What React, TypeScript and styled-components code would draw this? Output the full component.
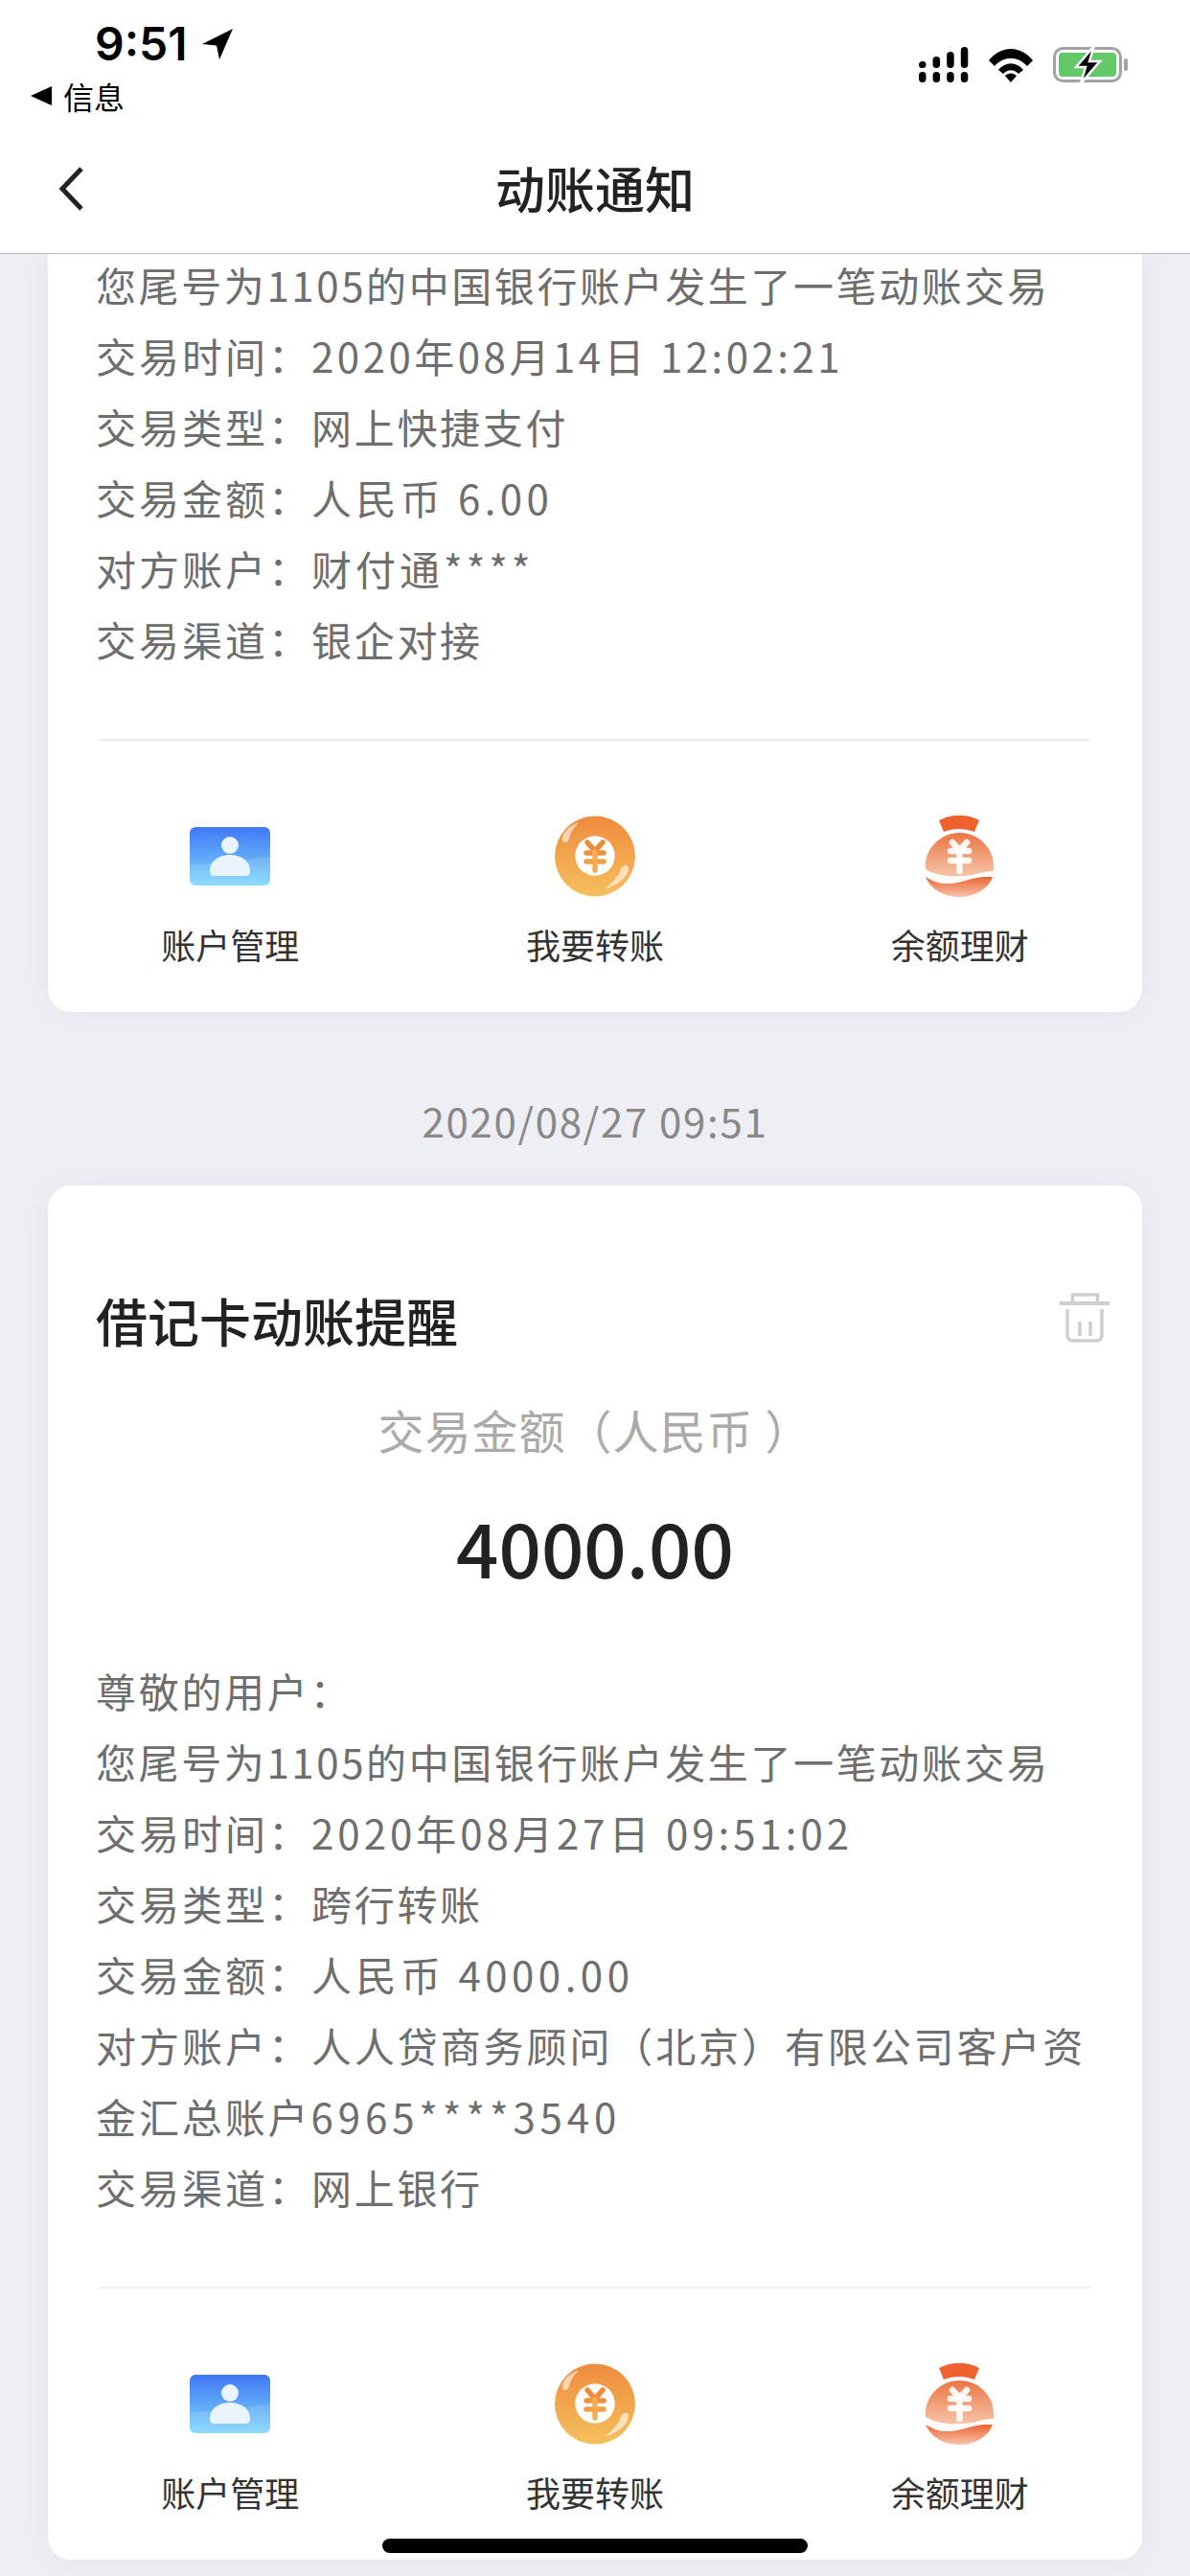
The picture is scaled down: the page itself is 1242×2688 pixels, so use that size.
import React from "react";
import styled, { createGlobalStyle } from "styled-components";

const GlobalStyle = createGlobalStyle`
  html, body {
    margin: 0;
    padding: 0;
    background: #eeeef5;
  }
  body {
    font-family: "Noto Sans CJK SC", "Noto Sans", sans-serif;
    color: #222;
  }
`;

function LocationArrow() {
  return (
    <svg width="34" height="34" viewBox="0 0 34 34">
      <path d="M33 1 L1 17 L16 18.5 L19 33 Z" fill="#000" />
    </svg>
  );
}

function SignalIcon() {
  const bars = [0, 1, 2, 3];
  return (
    <svg width="52" height="37" viewBox="0 0 52 37">
      {bars.map((i) => (
        <rect key={`b${i}`} x={i * 14.6} y="26" width="7.5" height="11" rx="3.7" fill="#000" />
      ))}
      {bars.map((i) => (
        <rect
          key={`t${i}`}
          x={i * 14.6}
          y={15 - i * 5}
          width="7.5"
          height={7 + i * 5}
          rx="3.7"
          fill="#000"
        />
      ))}
    </svg>
  );
}

function WifiIcon() {
  return (
    <svg width="48" height="36" viewBox="0 0 48 36">
      <path d="M1 13 C14 -3 34 -3 47 13 L41 19 C31 8 17 8 7 19 Z" fill="#000" />
      <path d="M11 23 C18 14 30 14 37 23 L32 27 C27 22 21 22 16 27 Z" fill="#000" />
      <path d="M18 29 C21 25.5 27 25.5 30 29 L24 36 Z" fill="#000" />
    </svg>
  );
}

function BatteryIcon() {
  return (
    <svg width="78" height="37" viewBox="0 0 78 37">
      <rect x="1.5" y="1.5" width="69" height="34" rx="9" fill="none" stroke="#a3a3a3" strokeWidth="3" />
      <rect x="74" y="12" width="4" height="13" rx="2" fill="#a3a3a3" />
      <rect x="6" y="6" width="60" height="25" rx="4" fill="#62c868" />
      <path d="M43 -1 L24 21 H34 L29 38 L49 15 H38 Z" fill="#000" stroke="#fff" strokeWidth="2.5" />
    </svg>
  );
}

function TrashIcon() {
  return (
    <svg width="52" height="52" viewBox="0 0 52 52" fill="none" stroke="#cfcfcf" strokeWidth="3.5">
      <path d="M13.5 9 V2 H39.5 V9" />
      <path d="M0 11 H52" strokeWidth="4" />
      <path d="M8 17 V44 C8 48 10 50 14 50 H38 C42 50 44 48 44 44 V17" />
      <path d="M21 30 V45 M32 30 V45" />
    </svg>
  );
}

function AccountIcon() {
  return (
    <svg width="84" height="61" viewBox="0 0 84 61">
      <defs>
        <linearGradient id="accountBg" x1="0" y1="0" x2="0" y2="1">
          <stop offset="0" stopColor="#3f78f6" />
          <stop offset="1" stopColor="#7dd6fd" />
        </linearGradient>
      </defs>
      <rect width="84" height="61" rx="6" fill="url(#accountBg)" />
      <path d="M0 40 C28 37 60 34 84 31 V55 C84 59 82 61 78 61 H6 C2 61 0 59 0 55 Z" fill="#fff" opacity="0.13" />
      <circle cx="42" cy="19" r="9" fill="#eaf4fe" />
      <path d="M21 46 C21 35 31 29 42 29 C53 29 63 35 63 46 C63 50 61 51 58 51 H26 C23 51 21 50 21 46 Z" fill="#eaf4fe" />
    </svg>
  );
}

function CoinIcon() {
  return (
    <svg width="84" height="85" viewBox="0 0 84 85">
      <defs>
        <linearGradient id="coinBg" x1="0" y1="0" x2="0" y2="1">
          <stop offset="0" stopColor="#ef8b3e" />
          <stop offset="1" stopColor="#f5c05c" />
        </linearGradient>
      </defs>
      <circle cx="42" cy="42.5" r="42" fill="url(#coinBg)" />
      <circle cx="42" cy="42" r="20.7" fill="#fff" />
      <g fill="none" strokeWidth="5.5" strokeLinecap="round">
        <path d="M34 28 L42 37 L50 28" stroke="#ee8a3c" />
        <path d="M33 39 H51" stroke="#ef903f" />
        <path d="M33 48 H51" stroke="#f1a047" />
        <path d="M42 38 V57" stroke="#f3ad4e" />
      </g>
      <path d="M8 26 C7 18 15 11 25 7 C20 13 16 18 15 24 C14 28 9 30 8 26 Z" fill="#fff" opacity="0.6" />
      <path d="M77 54 C78 64 66 72 52 77 C60 70 66 64 68 58 C70 51 76 50 77 54 Z" fill="#fff" opacity="0.6" />
    </svg>
  );
}

function BagIcon() {
  return (
    <svg width="73" height="85" viewBox="0 0 73 85">
      <defs>
        <linearGradient id="bagBg" x1="0" y1="0" x2="0" y2="1">
          <stop offset="0" stopColor="#ec7544" />
          <stop offset="1" stopColor="#f6c4a8" />
        </linearGradient>
        <linearGradient id="bagBase" x1="0" y1="0" x2="0" y2="1">
          <stop offset="0" stopColor="#ec6530" />
          <stop offset="1" stopColor="#f7c3ad" />
        </linearGradient>
      </defs>
      <path d="M15 5 C28 -2 44 -2 57 5 L52 17 C42 13 30 13 20 17 Z" fill="#ef622d" />
      <path d="M36.5 18 C56 18 72 34 72 52 V58 C62 57 53 63 41 63 C28 64 12 63 1 56 V52 C1 34 17 18 36.5 18 Z" fill="url(#bagBg)" />
      <path d="M1 64 C8 68 14 71 21 71 C35 72 48 65 61 64 L71 64 C67 76 53 85 36.5 85 C19 85 6 76 1 64 Z" fill="url(#bagBase)" />
      <g fill="none" stroke="#fff" strokeOpacity="0.92" strokeWidth="6.5" strokeLinecap="round">
        <path d="M29 28 L36.5 36 L44 28" />
        <path d="M27 37 H46" />
        <path d="M27 47 H46" />
        <path d="M36.5 37 V58" />
      </g>
    </svg>
  );
}

const actions = [
  { label: "账户管理", Icon: AccountIcon },
  { label: "我要转账", Icon: CoinIcon },
  { label: "余额理财", Icon: BagIcon },
];

function Actions() {
  return (
    <ActionRow>
      {actions.map(({ label, Icon }) => (
        <ActionItem key={label}>
          <ActionIcon>
            <Icon />
          </ActionIcon>
          <ActionLabel>{label}</ActionLabel>
        </ActionItem>
      ))}
    </ActionRow>
  );
}

// spacing is the tracking of the value text, tail is a run of digits after it
type Detail = { label?: string; value: string; spacing?: number; tail?: string };

const firstDetails: Detail[] = [
  { value: "您尾号为1105的中国银行账户发生了一笔动账交易", spacing: 2.6 },
  { label: "交易时间：", value: "2020年08月14日 12:02:21", spacing: 3.5 },
  { label: "交易类型：", value: "网上快捷支付" },
  { label: "交易金额：", value: "人民币 6.00", spacing: 4.4 },
  { label: "对方账户：", value: "财付通****", spacing: 4 },
  { label: "交易渠道：", value: "银企对接" },
];

const secondDetails: Detail[] = [
  { value: "尊敬的用户：" },
  { value: "您尾号为1105的中国银行账户发生了一笔动账交易", spacing: 2.6 },
  { label: "交易时间：", value: "2020年08月27日 09:51:02", spacing: 4 },
  { label: "交易类型：", value: "跨行转账" },
  { label: "交易金额：", value: "人民币 4000.00", spacing: 4.5 },
  {
    label: "对方账户：",
    value: "人人贷商务顾问（北京）有限公司客户资金汇总账户",
    spacing: 2.9,
    tail: "6965****3540",
  },
  { label: "交易渠道：", value: "网上银行" },
];

function Details({ items }: { items: Detail[] }) {
  return (
    <DetailList>
      {items.map((d) => (
        <DetailLine key={`${d.label}${d.value}`}>
          {d.label && <DetailLabel>{d.label}</DetailLabel>}
          <DetailValue $spacing={d.spacing}>{d.value}</DetailValue>
          {d.tail && <DetailValue $spacing={4.9}>{d.tail}</DetailValue>}
        </DetailLine>
      ))}
    </DetailList>
  );
}

export default function App() {
  return (
    <>
      <GlobalStyle />
      <Page>
        <Header>
          <StatusBar>
            <StatusLeft>
              <TimeRow>
                <Time>9:51</Time>
                <LocationArrow />
              </TimeRow>
              <BackRow>
                <BackTriangle />
                <BackText>信息</BackText>
              </BackRow>
            </StatusLeft>
            <StatusRight>
              <SignalIcon />
              <WifiIcon />
              <BatteryIcon />
            </StatusRight>
          </StatusBar>
          <NavBar>
            <BackButton>
              <svg width="28" height="46" viewBox="0 0 28 46" fill="none" stroke="#222" strokeWidth="5">
                <path d="M25 2 L5 23 L25 44" />
              </svg>
            </BackButton>
            <NavTitle>动账通知</NavTitle>
          </NavBar>
        </Header>
        <Feed>
          <ScrolledCard>
            <Details items={firstDetails} />
            <Divider />
            <Actions />
          </ScrolledCard>
          <DateStamp>2020/08/27 09:51</DateStamp>
          <Card>
            <CardTitleRow>
              <CardTitle>借记卡动账提醒</CardTitle>
              <TrashButton>
                <TrashIcon />
              </TrashButton>
            </CardTitleRow>
            <AmountLabel>交易金额（人民币 ）</AmountLabel>
            <Amount>4000.00</Amount>
            <Details items={secondDetails} />
            <Divider />
            <Actions />
          </Card>
        </Feed>
        <HomeIndicator />
      </Page>
    </>
  );
}

const Page = styled.div`
  position: relative;
  width: 1242px;
  height: 2688px;
  overflow: hidden;
  background: #eeeef5;
`;

const Header = styled.header`
  position: relative;
  z-index: 2;
  height: 264px;
  background: #fff;
  border-bottom: 1px solid #b8b8b8;
`;

const StatusBar = styled.div`
  display: flex;
  justify-content: space-between;
  height: 146px;
  padding: 0 65px 0 32px;
`;

const StatusLeft = styled.div`
  display: flex;
  flex-direction: column;
`;

const TimeRow = styled.div`
  display: flex;
  align-items: center;
  gap: 14px;
  height: 46px;
  margin: 23px 0 0 67px;
`;

const Time = styled.span`
  font-family: "Inter", "Liberation Sans", sans-serif;
  font-size: 48px;
  font-weight: 600;
  line-height: 46px;
  color: #000;
`;

const BackRow = styled.div`
  display: flex;
  align-items: center;
  gap: 12px;
  height: 40px;
  margin-top: 11px;
`;

const BackTriangle = styled.span`
  width: 0;
  height: 0;
  border-top: 10px solid transparent;
  border-bottom: 10px solid transparent;
  border-right: 22px solid #000;
`;

const BackText = styled.span`
  font-size: 32px;
  line-height: 40px;
  color: #000;
`;

const StatusRight = styled.div`
  display: flex;
  align-items: center;
  gap: 20px;
  height: 37px;
  margin-top: 49px;
`;

const NavBar = styled.nav`
  position: relative;
  display: flex;
  align-items: center;
  justify-content: center;
  height: 100px;
`;

const BackButton = styled.span`
  position: absolute;
  left: 60px;
  top: 28px;
  line-height: 0;
`;

const NavTitle = styled.h1`
  margin: 0;
  font-size: 52px;
  font-weight: 500;
  line-height: 100px;
  color: #222;
`;

const Feed = styled.main`
  display: flex;
  flex-direction: column;
  padding: 0 50px;
`;

const Card = styled.section`
  background: #fff;
  border-radius: 24px;
  padding: 0 50px;
  box-shadow: 0 0 30px rgba(60, 60, 90, 0.06);
`;

const ScrolledCard = styled(Card)`
  margin-top: -5px;
  border-radius: 0 0 24px 24px;
`;

const DateStamp = styled.div`
  height: 181px;
  font-size: 42px;
  line-height: 225px;
  letter-spacing: 1.7px;
  text-align: center;
  color: #888;
`;

const CardTitleRow = styled.div`
  position: relative;
  padding-top: 103px;
`;

const CardTitle = styled.h2`
  margin: 0;
  font-size: 54px;
  font-weight: 500;
  line-height: 76px;
  color: #222;
`;

const TrashButton = styled.span`
  position: absolute;
  right: -16px;
  top: 112px;
  line-height: 0;
`;

const AmountLabel = styled.div`
  margin-top: 40px;
  font-size: 48px;
  line-height: 70px;
  letter-spacing: 1px;
  text-align: center;
  color: #aaa;
`;

const Amount = styled.div`
  margin: 32px 0 59px;
  font-size: 78px;
  font-weight: 500;
  line-height: 110px;
  text-align: center;
  color: #222;
`;

const DetailList = styled.div`
  display: flex;
  flex-direction: column;
`;

const DetailLine = styled.div`
  font-size: 42px;
  line-height: 74px;
  color: #6e6e6e;
`;

const DetailLabel = styled.span`
  letter-spacing: 3px;
`;

const DetailValue = styled.span<{ $spacing?: number }>`
  letter-spacing: ${({ $spacing }) => $spacing ?? 2.7}px;
`;

const Divider = styled.hr`
  height: 2px;
  margin: 67px 4px 0 3px;
  border: 0;
  background: #eeeef4;
`;

const ActionRow = styled.div`
  display: grid;
  grid-template-columns: repeat(3, 1fr);
  margin: 0 -50px;
  padding: 78px 0 41px;
`;

const ActionItem = styled.div`
  display: flex;
  flex-direction: column;
  align-items: center;
`;

const ActionIcon = styled.div`
  display: flex;
  align-items: center;
  justify-content: center;
  height: 85px;
`;

const ActionLabel = styled.div`
  margin-top: 19px;
  font-size: 36px;
  line-height: 60px;
  color: #333;
`;

const HomeIndicator = styled.div`
  position: absolute;
  left: 399px;
  top: 2649px;
  width: 444px;
  height: 15px;
  border-radius: 8px;
  background: #000;
`;
